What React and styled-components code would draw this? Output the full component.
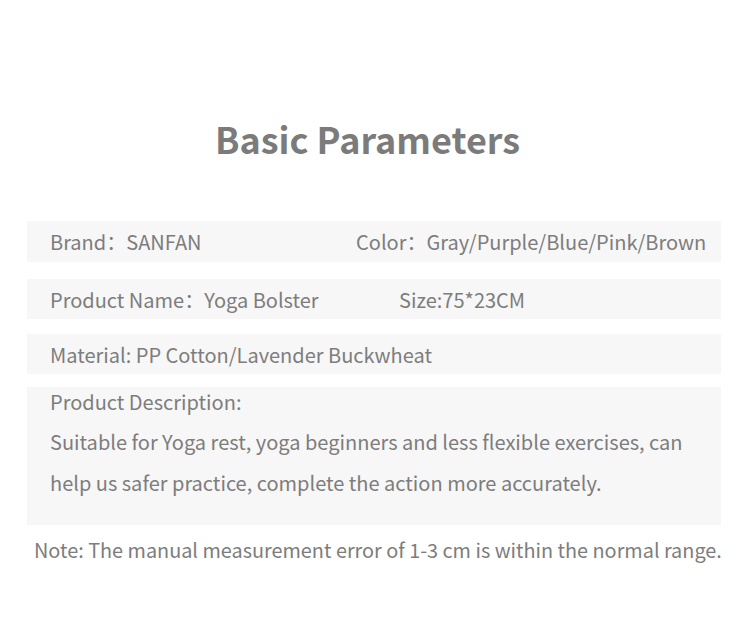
import React from 'react';
import styled, { createGlobalStyle } from 'styled-components';

const GlobalStyle = createGlobalStyle`
  html, body {
    margin: 0;
    padding: 0;
    background: #ffffff;
  }
  body {
    font-family: "Noto Sans CJK SC", "Noto Sans", sans-serif;
  }
`;

const Page = styled.div`
  width: 750px;
  height: 619px;
  background: #fff;
  color: #7d7d7d;
  overflow: hidden;
`;

const Title = styled.h1`
  margin: 0 0 58px;
  padding: 113px 15px 0 0;
  text-align: center;
  font-size: 36px;
  font-weight: 700;
  line-height: 50px;
  color: #7b7b7b;
`;

const Table = styled.div`
  margin-left: 27px;
  width: 694px;
  display: flex;
  flex-direction: column;
`;

const Row = styled.div`
  display: flex;
  align-items: center;
  height: ${(p) => p.$h || 41}px;
  margin-top: ${(p) => p.$mt || 0}px;
  padding-left: 23px;
  background: #f7f7f7;
  font-size: 20px;
  white-space: nowrap;
`;

const Cell = styled.div`
  width: ${(p) => (p.$w ? `${p.$w}px` : 'auto')};
  flex-shrink: 0;
`;

const DescBox = styled.div`
  margin-top: 13px;
  padding: 0 0 22px 23px;
  background: #f7f7f7;
  font-size: 20px;
`;

const DescHead = styled.div`
  line-height: 30px;
  padding-bottom: 5px;
`;

const DescText = styled.p`
  margin: 0;
  line-height: 40.5px;
  width: 650px;
`;

const Note = styled.div`
  margin-top: 10px;
  padding-left: 34px;
  font-size: 19.85px;
  line-height: 30px;
  white-space: nowrap;
`;

export default function App() {
  return (
    <Page>
      <GlobalStyle />
      <Title>Basic Parameters</Title>
      <Table>
        <Row>
          <Cell $w={306}>Brand：SANFAN</Cell>
          <Cell>Color：Gray/Purple/Blue/Pink/Brown</Cell>
        </Row>
        <Row $mt={17} $h={40}>
          <Cell $w={349}>Product Name：Yoga Bolster</Cell>
          <Cell>Size:75*23CM</Cell>
        </Row>
        <Row $mt={15} $h={40}>
          <Cell>Material: PP Cotton/Lavender Buckwheat</Cell>
        </Row>
        <DescBox>
          <DescHead>Product Description:</DescHead>
          <DescText>
            Suitable for Yoga rest, yoga beginners and less flexible exercises, can help us safer practice, complete the action more accurately.
          </DescText>
        </DescBox>
      </Table>
      <Note>Note: The manual measurement error of 1-3 cm is within the normal range.</Note>
    </Page>
  );
}
